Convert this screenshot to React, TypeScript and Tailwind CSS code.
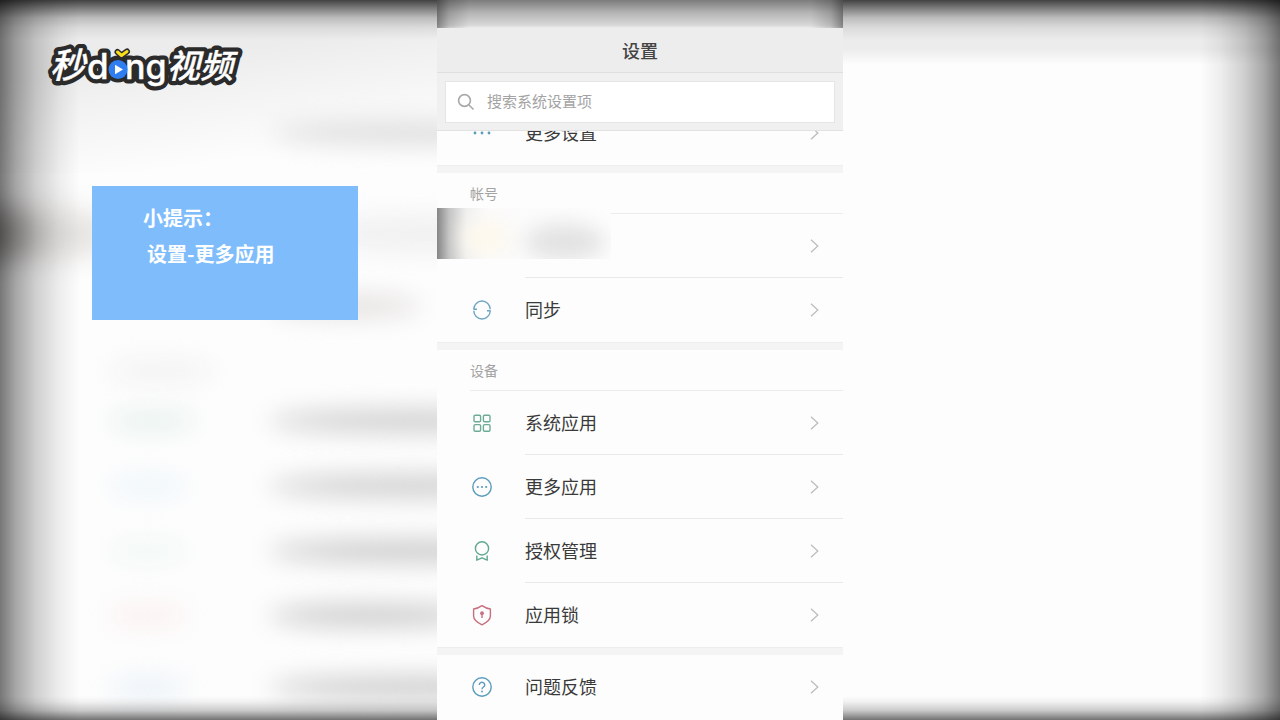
import type { ReactNode } from 'react';
import { clsx } from 'clsx';

type IconName = 'dots' | 'sync' | 'grid' | 'more' | 'badge' | 'lock' | 'help';

interface RowItem {
  label: string;
  icon?: IconName;
}

const accountItems: RowItem[] = [{ label: '' }, { label: '同步', icon: 'sync' }];

const deviceItems: RowItem[] = [
  { label: '系统应用', icon: 'grid' },
  { label: '更多应用', icon: 'more' },
  { label: '授权管理', icon: 'badge' },
  { label: '应用锁', icon: 'lock' },
];

const iconPaths: Record<IconName, { color: string; body: ReactNode }> = {
  dots: {
    color: '#5b9bbd',
    body: (
      <g fill="currentColor" stroke="none">
        <circle cx="5" cy="12" r="1.4" />
        <circle cx="12" cy="12" r="1.4" />
        <circle cx="19" cy="12" r="1.4" />
      </g>
    ),
  },
  sync: {
    color: '#6fa6c4',
    body: (
      <>
        <path d="M3.8 11.2A8.2 8.2 0 0 1 20.2 11.2" />
        <path d="M20.2 12.8A8.2 8.2 0 0 1 3.8 12.8" />
        <path d="M3.4 11.2h3.6M20.6 12.8H17" />
      </>
    ),
  },
  grid: {
    color: '#6dab98',
    body: (
      <>
        <rect x="4" y="4.2" width="6.6" height="6.6" rx="1.2" />
        <rect x="13.4" y="4.2" width="6.6" height="6.6" rx="1.2" />
        <rect x="4" y="13.6" width="6.6" height="6.6" rx="1.2" />
        <rect x="13.4" y="13.6" width="6.6" height="6.6" rx="1.2" />
      </>
    ),
  },
  more: {
    color: '#5b9bbd',
    body: (
      <>
        <circle cx="12" cy="12" r="9.2" />
        <g fill="currentColor" stroke="none">
          <circle cx="7.8" cy="12" r="1.1" />
          <circle cx="12" cy="12" r="1.1" />
          <circle cx="16.2" cy="12" r="1.1" />
        </g>
      </>
    ),
  },
  badge: {
    color: '#62a890',
    body: (
      <>
        <circle cx="12" cy="9.4" r="6.6" />
        <path d="M6.8 16.5v4.7l5.2-2.4 5.2 2.4v-4.7" />
      </>
    ),
  },
  lock: {
    color: '#c8707e',
    body: (
      <>
        <path d="M12 2.6c2.4 1.7 5 2.9 8.4 3.4v7c0 4-3.4 6.4-8.4 8.8-5-2.4-8.4-4.8-8.4-8.8V6c3.4-.5 6-1.7 8.4-3.4z" />
        <circle cx="12" cy="10.2" r="1.9" fill="currentColor" stroke="none" />
        <path d="M12 10v5" />
      </>
    ),
  },
  help: {
    color: '#5b9bbd',
    body: (
      <>
        <circle cx="12" cy="12" r="9.2" />
        <path d="M9.3 9.9a2.7 2.6 0 1 1 4.2 2.1c-1 .7-1.5 1.1-1.5 2.3" />
        <circle cx="12" cy="16.5" r=".9" fill="currentColor" stroke="none" />
      </>
    ),
  },
};

function RowIcon({ name }: { name: IconName }) {
  const { color, body } = iconPaths[name];
  return (
    <svg
      viewBox="0 0 24 24"
      className="size-6"
      style={{ color }}
      fill="none"
      stroke="currentColor"
      strokeWidth="1.4"
      strokeLinejoin="round"
      aria-hidden="true"
    >
      {body}
    </svg>
  );
}

function Row({ item, divider = false }: { item: RowItem; divider?: boolean }) {
  return (
    <button
      type="button"
      aria-label={item.label || '帐号'}
      className="flex h-16 w-full shrink-0 items-center pl-[33px] text-left"
    >
      <span className="flex w-[55px] shrink-0">{item.icon && <RowIcon name={item.icon} />}</span>
      <span
        className={clsx(
          'flex h-full flex-1 items-center justify-between border-b pr-6',
          divider ? 'border-[#e9e9e9]' : 'border-transparent'
        )}
      >
        <span className="pb-0.5 text-[18px] leading-6 text-[#3a3a3a]">{item.label}</span>
        <svg viewBox="0 0 9 14" className="h-[14px] w-[9px]" fill="none" stroke="#bdbdbd" strokeWidth="1.3" aria-hidden="true">
          <path d="M1 .8 7.8 7 1 13.2" />
        </svg>
      </span>
    </button>
  );
}

function Section({ title, items, children }: { title: string; items: RowItem[]; children?: ReactNode }) {
  return (
    <section className="relative">
      <div className="pl-[33px]">
        <h2 className="h-[41px] border-b border-[#ececec] text-[14px] leading-[41px] text-[#a3a3a3]">{title}</h2>
      </div>
      {items.map((item, i) => (
        <Row key={i} item={item} divider={i < items.length - 1} />
      ))}
      {children}
    </section>
  );
}

function Gap() {
  return <div className="h-2 shrink-0 border-t border-[#eeeeee] bg-[#f4f4f4]" />;
}

// blurred streaks behind the phone, positions in percent of the left side
const streaks = [
  'left-[61%] top-[17%] h-[3%] w-[60%] bg-[#dcdcdc]',
  'left-[60%] top-[57%] h-[3%] w-[64%] bg-[#cecece]',
  'left-[60%] top-[66%] h-[3%] w-[64%] bg-[#cecece]',
  'left-[60%] top-[75%] h-[3%] w-[64%] bg-[#cacaca]',
  'left-[60%] top-[84%] h-[3%] w-[46%] bg-[#cacaca]',
  'left-[60%] top-[94%] h-[3%] w-[64%] bg-[#cacaca]',
  'left-[24%] top-[50%] h-[3%] w-[24%] bg-[#f2f2f2]',
  'left-[24%] top-[57%] h-[3%] w-[20%] bg-[#e8f2ef]',
  'left-[24%] top-[66%] h-[3%] w-[18%] bg-[#eef6fb]',
  'left-[24%] top-[75%] h-[3%] w-[18%] bg-[#f1f8f5]',
  'left-[24%] top-[84%] h-[3%] w-[18%] bg-[#fcf0f0]',
  'left-[24%] top-[94%] h-[3%] w-[18%] bg-[#eaf2f8]',
  'left-[60%] top-[41%] h-[3%] w-[34%] bg-[#e3e1df]',
  'left-[70%] top-[30%] h-[5%] w-[50%] bg-[#f0f0f0]',
];

function Backdrop() {
  return (
    <div className="absolute inset-0 overflow-hidden bg-[#fdfdfd]" aria-hidden="true">
      <div className="absolute inset-x-0 top-0 h-[9%] bg-[linear-gradient(#ececec_75%,#fdfdfd)]" />
      <div className="absolute left-0 top-0 h-[24%] w-[35%] bg-[linear-gradient(172deg,#ececec_35%,#f2f2f2_50%,#fdfdfd_82%)]" />
      <div className="absolute inset-y-0 left-0 w-[35%] overflow-hidden">
        {streaks.map((cls) => (
          <div key={cls} className={clsx('absolute rounded-[50%] blur-[12px]', cls)} />
        ))}
        <div className="absolute -left-[14%] top-[29%] h-[7%] w-[22%] rounded-[50%] bg-[#45423f]/50 blur-[14px]" />
        <div className="absolute left-0 top-[29%] h-[7%] w-[24%] rounded-[50%] bg-[#c9c5c0]/50 blur-[14px]" />
      </div>
      <div className="absolute inset-y-0 left-0 w-20 bg-[linear-gradient(to_right,rgb(0_0_0/.53),rgb(0_0_0/.34)_20%,rgb(0_0_0/.18)_45%,rgb(0_0_0/.06)_75%,transparent)]" />
      <div className="absolute inset-y-0 right-0 w-20 bg-[linear-gradient(to_left,rgb(0_0_0/.53),rgb(0_0_0/.34)_20%,rgb(0_0_0/.18)_45%,rgb(0_0_0/.06)_75%,transparent)]" />
      <div className="absolute inset-x-0 top-0 h-10 bg-[linear-gradient(rgb(0_0_0/.72),rgb(0_0_0/.48)_20%,rgb(0_0_0/.2)_45%,rgb(0_0_0/.07)_70%,transparent)]" />
      <div className="absolute inset-x-0 bottom-0 h-6 bg-[linear-gradient(to_top,rgb(0_0_0/.55),rgb(0_0_0/.2)_40%,rgb(0_0_0/.05)_75%,transparent)]" />
    </div>
  );
}

function LogoText() {
  return (
    <>
      <text x="14" y="42" fontSize="35" fontStyle="italic">
        秒
      </text>
      <text x="51" y="43" fontSize="35" fontFamily="Inter, sans-serif">
        d
      </text>
      <text x="89" y="43" fontSize="34" fontFamily="Inter, sans-serif">
        ng
      </text>
      <text x="131" y="42" fontSize="33" fontStyle="italic">
        视频
      </text>
    </>
  );
}

function Logo() {
  return (
    <svg
      viewBox="0 0 212 64"
      className="h-[64px] w-[212px]"
      fontFamily='"Noto Sans CJK SC", sans-serif'
      fontWeight="500"
      strokeLinejoin="round"
      role="img"
      aria-label="秒dong视频"
    >
      <g fill="#2b2b2b" stroke="#2b2b2b" strokeWidth="9" aria-hidden="true">
        <LogoText />
        <circle cx="82" cy="33" r="9" />
      </g>
      <g fill="#ffffff" stroke="#ffffff" strokeWidth=".4">
        <LogoText />
      </g>
      <path d="M81.5 16l4 3.5 5.5-4" fill="none" stroke="#2b2b2b" strokeWidth="6" strokeLinecap="round" />
      <path d="M81.5 16l4 3.5 5.5-4" fill="none" stroke="#f9de1c" strokeWidth="3" strokeLinecap="round" />
      <circle cx="82" cy="33.5" r="9.5" fill="#2f7df0" />
      <path d="M79 28.8v9.5l8-4.7z" fill="#ffffff" />
    </svg>
  );
}

function Tip() {
  return (
    <div className="ml-[92px] mr-[79px] mt-[86px] h-[134px] bg-[#7ebcfc] pl-[51px] pt-[14px] text-[20px] font-bold leading-9 text-white">
      <p>小提示：</p>
      <p className="pl-1">设置-更多应用</p>
    </div>
  );
}

function Phone() {
  return (
    <main className="flex w-[406px] shrink-0 flex-col bg-[#fdfdfd]">
      <div className="h-7 shrink-0 bg-[linear-gradient(to_right,rgb(0_0_0/.4),rgb(0_0_0/.15)_3%,transparent_8%,transparent_92%,rgb(0_0_0/.15)_97%,rgb(0_0_0/.4)),linear-gradient(#7c7c7c,#b4b4b4_45%,#d8d8d8_90%,#ededed)]" />
      <header className="shrink-0 bg-[#ededed]">
        <h1 className="h-[45px] border-b border-[#dfdfdf] text-center text-[18px] font-medium leading-[44px] text-[#444444]">
          设置
        </h1>
        <div className="border-b border-[#e2e2e2] bg-[#f0f0f0] px-2 pb-[7px] pt-2">
          <label className="flex h-[42px] items-center gap-3 border border-[#e6e6e6] bg-white pl-[11px]">
            <svg viewBox="0 0 18 18" className="size-[18px]" fill="none" stroke="#a8a8a8" strokeWidth="1.6" aria-hidden="true">
              <circle cx="7.5" cy="7.5" r="5.9" />
              <path d="M11.7 11.7 16.5 16.5" />
            </svg>
            <input
              type="text"
              aria-label="搜索系统设置项"
              placeholder="搜索系统设置项"
              className="min-w-0 flex-1 bg-transparent pb-0.5 text-[15px] text-[#333333] outline-none placeholder:text-[#a3a3a3]"
            />
          </label>
        </div>
      </header>

      {/* the row is scrolled halfway under the search bar */}
      <div className="flex h-[34px] shrink-0 items-end overflow-hidden">
        <Row item={{ label: '更多设置', icon: 'dots' }} />
      </div>
      <Gap />
      <Section title="帐号" items={accountItems}>
        <div
          className="absolute left-0 top-[35px] h-[51px] w-[174px] overflow-hidden bg-[linear-gradient(to_right,#868686,#c4c4c4_7%,#f0f0f0_17%,#fbfbfb_28%,#fdfdfd)]"
          aria-hidden="true"
        >
          <div className="absolute left-6 top-3 h-9 w-12 rounded-[50%] bg-[#fdf8ec] blur-[10px]" />
          <div className="absolute left-[88px] top-4 h-9 w-[80px] rounded-[50%] bg-[#e2e2e2] blur-[10px]" />
        </div>
      </Section>
      <Gap />
      <Section title="设备" items={deviceItems} />
      <Gap />
      <Row item={{ label: '问题反馈', icon: 'help' }} />
    </main>
  );
}

export default function App() {
  return (
    <div className="relative flex min-h-screen overflow-hidden font-['Noto_Sans_CJK_SC',sans-serif]">
      <Backdrop />
      <div className="relative flex min-w-0 flex-1 flex-col">
        <div className="pl-9 pt-9">
          <Logo />
        </div>
        <Tip />
      </div>
      <div className="relative flex">
        <Phone />
      </div>
      <div className="min-w-0 flex-1" />
    </div>
  );
}
